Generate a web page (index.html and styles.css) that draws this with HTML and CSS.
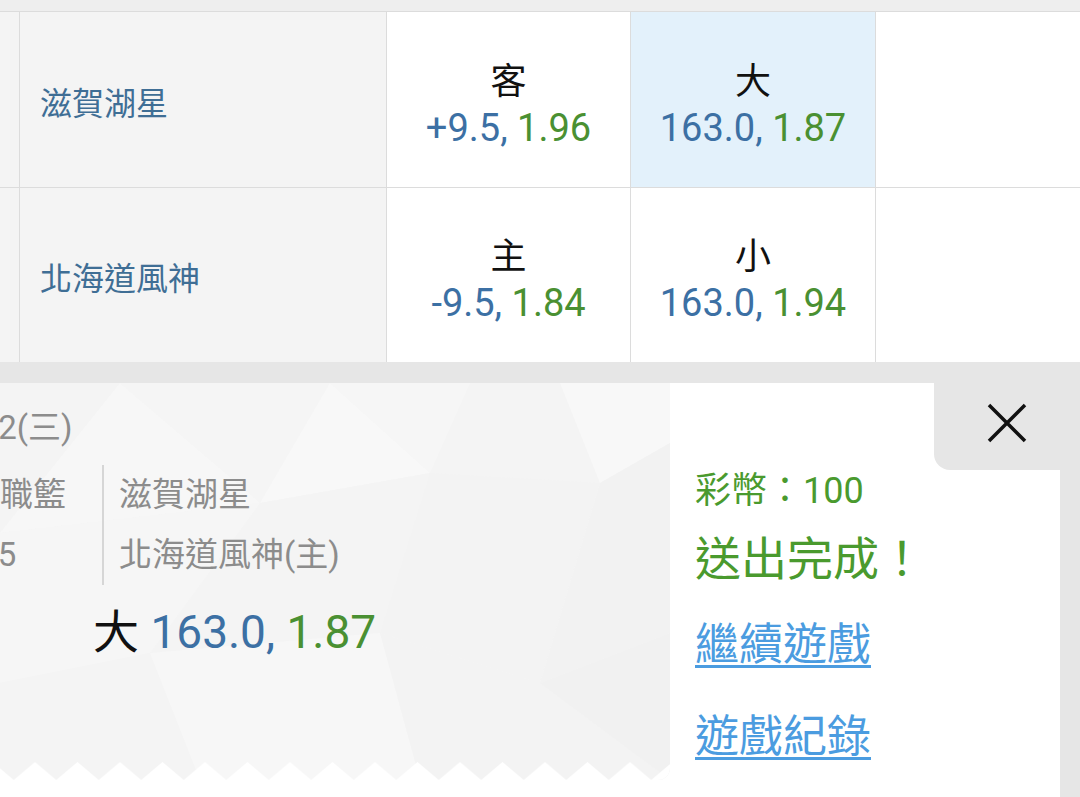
FILE: index.html
```html
<!DOCTYPE html>
<html lang="zh-Hant">
<head>
  <meta charset="UTF-8">
  <meta name="viewport" content="width=device-width, initial-scale=1.0">
  <title>投注完成</title>
  <link rel="stylesheet" href="styles.css">
</head>
<body>
  <div class="board">
    <div class="odds">
      <div class="edge"></div>
      <div class="team">滋賀湖星</div>
      <div class="bet">
        <span class="label">客</span>
        <span class="line"><span class="blue">+9.5,</span> <span class="green">1.96</span></span>
      </div>
      <div class="bet picked">
        <span class="label">大</span>
        <span class="line"><span class="blue">163.0,</span> <span class="green">1.87</span></span>
      </div>
      <div class="empty"></div>

      <div class="edge"></div>
      <div class="team">北海道風神</div>
      <div class="bet">
        <span class="label">主</span>
        <span class="line"><span class="blue">-9.5,</span> <span class="green">1.84</span></span>
      </div>
      <div class="bet">
        <span class="label">小</span>
        <span class="line"><span class="blue">163.0,</span> <span class="green">1.94</span></span>
      </div>
      <div class="empty"></div>
    </div>
  </div>

  <div class="sheet">
    <div class="ticket">
      <div class="ticket-face">
        <svg width="670" height="397" viewBox="0 0 670 397">
          <defs>
            <pattern id="zigzag" width="42.5" height="18" x="13.75" y="379" patternUnits="userSpaceOnUse">
              <polygon points="0,18 21.25,0 42.5,18" fill="#fff"/>
            </pattern>
          </defs>
          <rect width="670" height="397" fill="#f5f5f5"/>
          <polygon points="0,0 120,0 0,150" fill="#f4f4f4"/>
          <polygon points="120,0 260,120 0,150" fill="#f7f7f7"/>
          <polygon points="120,0 330,0 260,120" fill="#f5f5f5"/>
          <polygon points="330,0 430,90 260,120" fill="#f8f8f8"/>
          <polygon points="330,0 470,0 430,90" fill="#f6f6f6"/>
          <polygon points="470,0 560,0 600,100 430,90" fill="#f4f4f4"/>
          <polygon points="560,0 670,0 670,60 600,100" fill="#f8f8f8"/>
          <polygon points="0,150 260,120 150,270 0,300" fill="#f6f6f6"/>
          <polygon points="260,120 430,90 380,250 150,270" fill="#f4f4f4"/>
          <polygon points="430,90 600,100 540,300 380,250" fill="#f3f3f3"/>
          <polygon points="600,100 670,60 670,250 540,300" fill="#f2f2f2"/>
          <polygon points="0,300 150,270 200,397 0,397" fill="#f4f4f4"/>
          <polygon points="150,270 380,250 420,397 200,397" fill="#f7f7f7"/>
          <polygon points="380,250 540,300 670,397 420,397" fill="#f3f3f3"/>
          <polygon points="540,300 670,250 670,397" fill="#f1f1f1"/>
          <rect y="379" width="670" height="18" fill="url(#zigzag)"/>
        </svg>
      </div>

      <div class="ticket-body">
        <div class="date">10/02(三)</div>
        <div class="match">
          <div class="meta">
            <div>日本職籃</div>
            <div>18:05</div>
          </div>
          <div class="teams">
            <div>滋賀湖星</div>
            <div>北海道風神(主)</div>
          </div>
        </div>
        <div class="pick">大 <span class="blue">163.0,</span> <span class="green">1.87</span></div>
      </div>
    </div>

    <div class="result">
      <div class="close">
        <svg width="40" height="40" viewBox="0 0 40 40">
          <path d="M2 2 L38 38 M38 2 L2 38" stroke="#111" stroke-width="3.5" fill="none"/>
        </svg>
      </div>
      <div class="coins">彩幣：100</div>
      <div class="done">送出完成！</div>
      <a class="link" href="#">繼續遊戲</a>
      <a class="link" href="#">遊戲紀錄</a>
    </div>
  </div>
</body>
</html>
```

FILE: styles.css
```css
body {
  margin: 0;
  font-family: Roboto, "Noto Sans CJK TC", sans-serif;
  background: #fff;
  overflow: hidden;
}
.blue {
  color: #3c70a4;
}
.green {
  color: #4a9032;
}
.board {
  background: #eeeeee;
  padding-top: 11px;
}
.odds {
  display: grid;
  grid-template-columns: 19px 366px 243px 244px 1fr;
  grid-template-rows: 175px 174px;
  gap: 1px;
  background: #dcdcdc;
  border-top: 1px solid #dcdcdc;
}
.edge {
  background: #f4f4f4;
}
.team {
  background: #f4f4f4;
  color: #3f6e95;
  font-size: 32px;
  display: flex;
  align-items: center;
  padding-left: 20px;
  padding-top: 2px;
}
.bet {
  background: #fff;
  display: flex;
  flex-direction: column;
  align-items: center;
  justify-content: center;
  padding-top: 10px;
}
.bet.picked {
  background: #e3f1fb;
}
.label {
  font-size: 36px;
  line-height: 46px;
  color: #111;
}
.line {
  font-size: 38px;
  line-height: 46px;
}
.empty {
  background: #fff;
}

.sheet {
  background: #e6e6e6;
  padding-top: 21px;
  height: 414px;
  display: flex;
}
.ticket {
  width: 670px;
  position: relative;
  background: #fff;
}
.ticket-face {
  position: absolute;
  top: 0;
  left: 0;
  width: 670px;
  height: 397px;
  border-bottom-right-radius: 12px;
  overflow: hidden;
}
.ticket-face svg {
  display: block;
}
.ticket-body {
  position: relative;
  padding-top: 20px;
  color: #8c8c8c;
  font-size: 33px;
}
.date {
  margin-left: -71px;
  line-height: 50px;
  margin-bottom: 12px;
}
.match {
  display: flex;
}
.meta {
  margin-left: -66px;
  width: 168px;
  border-right: 2px solid #d6d6d6;
  line-height: 60px;
}
.teams {
  padding-left: 15px;
  line-height: 60px;
}
.pick {
  margin-top: 19px;
  padding-left: 93px;
  font-size: 46px;
  line-height: 56px;
  color: #111;
}

.result {
  width: 390px;
  background: #fff;
  position: relative;
  padding: 83px 0 0 25px;
  box-sizing: border-box;
}
.close {
  position: absolute;
  top: 0;
  right: -20px;
  width: 146px;
  height: 87px;
  background: #e6e6e6;
  border-bottom-left-radius: 16px;
  display: flex;
  justify-content: center;
  padding-top: 20px;
  box-sizing: border-box;
}
.coins {
  color: #4a9a2e;
  font-size: 36px;
  line-height: 50px;
}
.done {
  color: #4a9a2e;
  font-size: 46px;
  line-height: 60px;
  margin-top: 13px;
}
.link {
  display: block;
  width: max-content;
  color: #4b9ce0;
  font-size: 44px;
  line-height: 60px;
  text-decoration: underline;
  text-decoration-thickness: 3px;
  text-underline-offset: 5px;
  margin-top: 26px;
}
.link + .link {
  margin-top: 32px;
}
```
